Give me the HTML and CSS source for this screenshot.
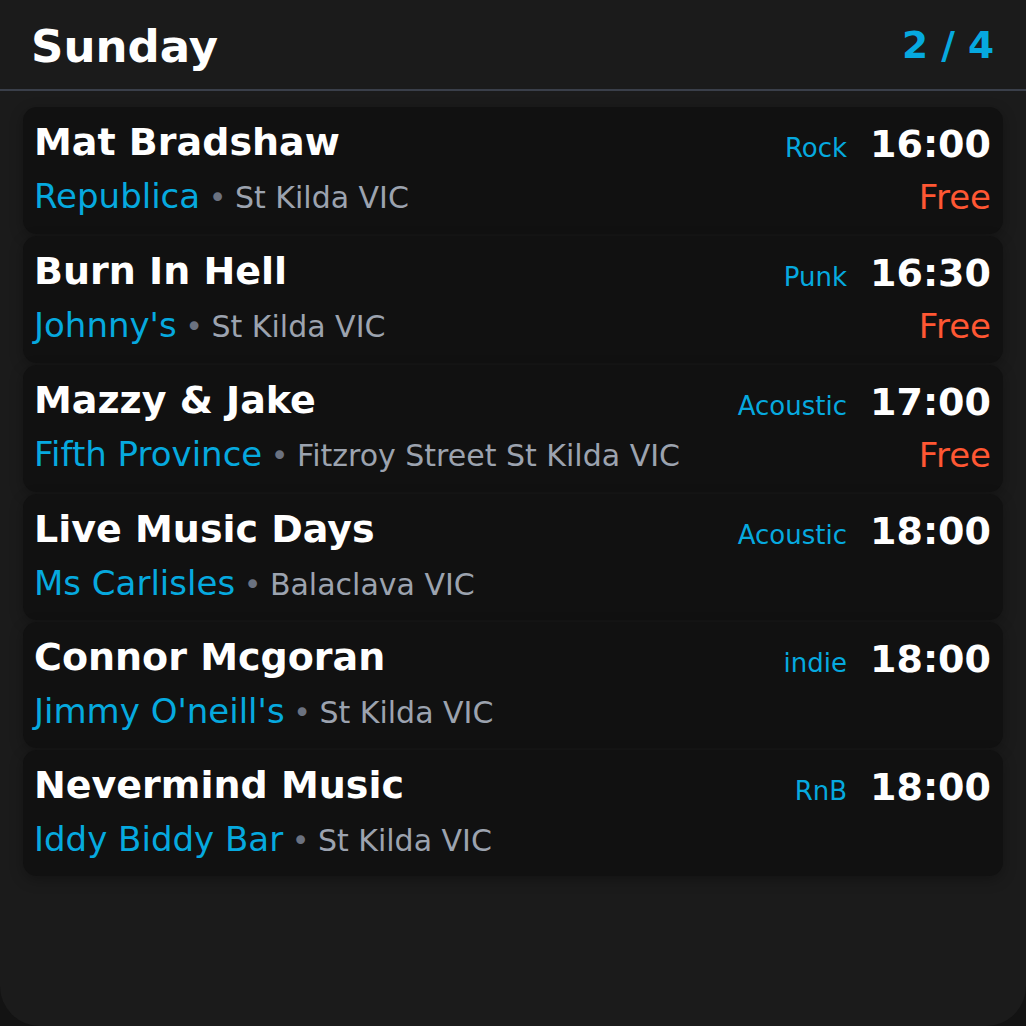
FILE: index.html
```html
<!DOCTYPE html>
<html lang="en">
<head>
<meta charset="utf-8">
<title>Sunday gigs</title>
<link rel="stylesheet" href="styles.css">
</head>
<body>
<div class="frame">
  <header class="header">
    <h1 class="day">Sunday</h1>
    <div class="pager">2 / 4</div>
  </header>
  <main class="list">
    <article class="card">
      <div class="info">
        <div class="name">Mat Bradshaw</div>
        <div class="place"><span class="venue">Republica</span> <span class="dot">•</span> <span class="loc">St Kilda VIC</span></div>
      </div>
      <div class="meta">
        <div class="when"><span class="genre">Rock</span><span class="time">16:00</span></div>
        <div class="price">Free</div>
      </div>
    </article>
    <article class="card">
      <div class="info">
        <div class="name">Burn In Hell</div>
        <div class="place"><span class="venue">Johnny's</span> <span class="dot">•</span> <span class="loc">St Kilda VIC</span></div>
      </div>
      <div class="meta">
        <div class="when"><span class="genre">Punk</span><span class="time">16:30</span></div>
        <div class="price">Free</div>
      </div>
    </article>
    <article class="card">
      <div class="info">
        <div class="name">Mazzy &amp; Jake</div>
        <div class="place"><span class="venue">Fifth Province</span> <span class="dot">•</span> <span class="loc">Fitzroy Street St Kilda VIC</span></div>
      </div>
      <div class="meta">
        <div class="when"><span class="genre">Acoustic</span><span class="time">17:00</span></div>
        <div class="price">Free</div>
      </div>
    </article>
    <article class="card">
      <div class="info">
        <div class="name">Live Music Days</div>
        <div class="place"><span class="venue">Ms Carlisles</span> <span class="dot">•</span> <span class="loc">Balaclava VIC</span></div>
      </div>
      <div class="meta">
        <div class="when"><span class="genre">Acoustic</span><span class="time">18:00</span></div>
      </div>
    </article>
    <article class="card">
      <div class="info">
        <div class="name">Connor Mcgoran</div>
        <div class="place"><span class="venue">Jimmy O'neill's</span> <span class="dot">•</span> <span class="loc">St Kilda VIC</span></div>
      </div>
      <div class="meta">
        <div class="when"><span class="genre">indie</span><span class="time">18:00</span></div>
      </div>
    </article>
    <article class="card">
      <div class="info">
        <div class="name">Nevermind Music</div>
        <div class="place"><span class="venue">Iddy Biddy Bar</span> <span class="dot">•</span> <span class="loc">St Kilda VIC</span></div>
      </div>
      <div class="meta">
        <div class="when"><span class="genre">RnB</span><span class="time">18:00</span></div>
      </div>
    </article>
  </main>
</div>
</body>
</html>
```

FILE: styles.css
```css
* {
  box-sizing: border-box;
}

html, body {
  margin: 0;
  padding: 0;
  background: #131313;
}

body {
  font-family: "DejaVu Sans", "Liberation Sans", sans-serif;
  color: #ffffff;
}

.frame {
  width: 1026px;
  height: 1026px;
  background: #1b1b1b;
  border-radius: 0 0 40px 40px;
  overflow: hidden;
  display: flex;
  flex-direction: column;
}

.header {
  display: flex;
  align-items: center;
  justify-content: space-between;
  padding: 21px 32px 17px 31px;
  border-bottom: 2px solid #3a3f4a;
}

.day {
  margin: 0;
  font-size: 45px;
  line-height: 51px;
  font-weight: 700;
  color: #ffffff;
}

.pager {
  font-size: 37.5px;
  font-weight: 700;
  color: #06a9df;
  line-height: 42px;
  margin-top: -3px;
}

.list {
  display: flex;
  flex-direction: column;
  gap: 2px;
  padding: 16px 23px;
}

.card {
  display: flex;
  justify-content: space-between;
  align-items: flex-start;
  padding: 12px 12px 13px 11px;
  background: #111111;
  border-radius: 14px;
  box-shadow: 0 4px 14px rgba(0, 0, 0, 0.28);
}

.info {
  display: flex;
  flex-direction: column;
  gap: 10px;
}

.name {
  font-size: 38px;
  line-height: 46px;
  font-weight: 700;
  color: #ffffff;
}

.place {
  font-size: 30px;
  line-height: 45px;
  white-space: nowrap;
  word-spacing: -1px;
}

.venue {
  font-size: 34px;
  line-height: 1;
  word-spacing: 0;
  color: #06a9df;
}

.dot {
  line-height: 1;
  color: #6b7280;
}

.loc {
  line-height: 1;
  word-spacing: 0;
  color: #9ca3af;
}

.meta {
  display: flex;
  flex-direction: column;
  align-items: flex-end;
  gap: 4px;
}

.when {
  display: flex;
  align-items: baseline;
  gap: 23px;
  height: 50px;
}

.genre {
  font-size: 26px;
  line-height: 30px;
  color: #06a9df;
}

.time {
  font-size: 38px;
  line-height: 50px;
  font-weight: 700;
  color: #ffffff;
}

.price {
  font-size: 34px;
  line-height: 48px;
  color: #ff5733;
}
```
